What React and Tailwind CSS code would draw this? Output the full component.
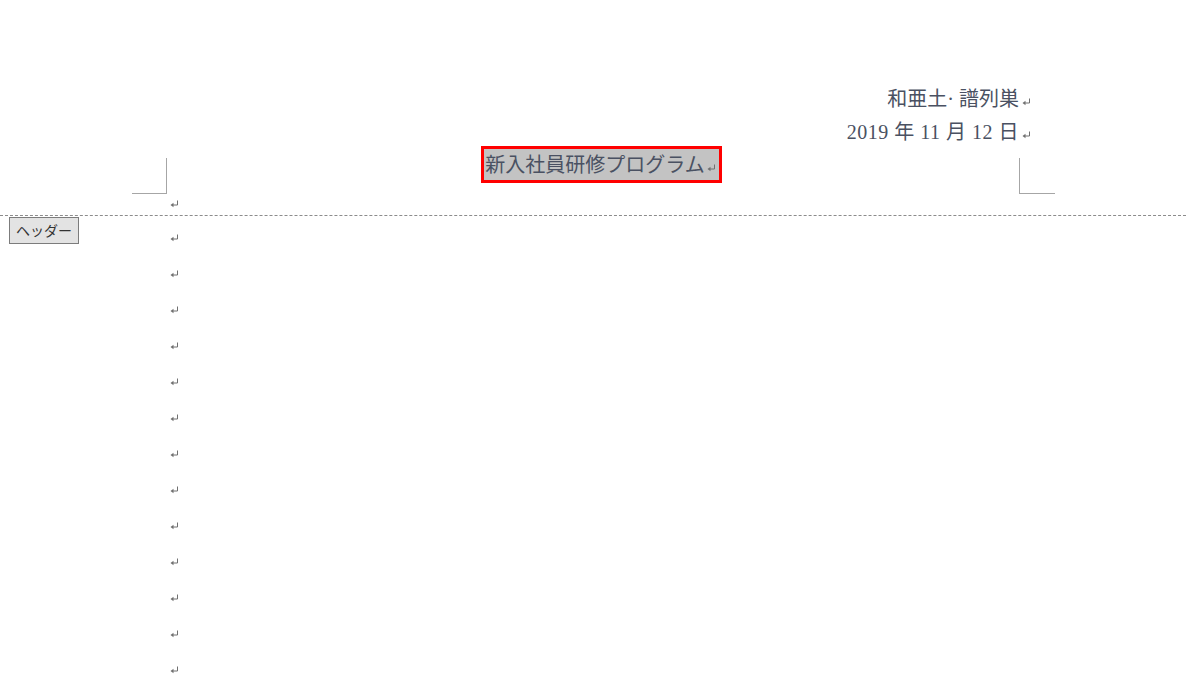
import React from "react";

const font = { fontFamily: '"Liberation Serif", "Noto Sans CJK JP", serif' };

function Mark({ className = "" }) {
  return (
    <svg width="9" height="8" viewBox="0 0 9 8" className={`shrink-0 ${className}`}>
      <path d="M7.5 0.5 V5 H2" stroke="#707070" strokeWidth="1" fill="none" />
      <path d="M0.5 5 L3.5 2.8 L3.5 7.2 Z" fill="#707070" />
    </svg>
  );
}

const bodyRows = Array.from({ length: 13 });

export default function App() {
  return (
    <div className="relative w-[1186px] h-[689px] bg-white overflow-hidden text-[#4a5162]" style={font}>
      {/* header area */}
      <div className="flex pt-[82px] h-[194px]">
        <div className="w-[167px] flex flex-col justify-end items-end">
          <div className="w-[35px] h-[36px] border-r border-b border-[#a6a6a6]" />
        </div>
        <div className="w-[852px] flex flex-col text-[20px]">
          <div className="h-[33px] flex items-center justify-end">
            <span>和亜土· 譜列巣</span>
            <span className="w-0 overflow-visible flex"><Mark className="ml-[3px] mt-[6px]" /></span>
          </div>
          <div className="h-[33px] flex items-center justify-end">
            <span className="tracking-[0.5px]">2019 年 11 月 12 日</span>
            <span className="w-0 overflow-visible flex"><Mark className="ml-[3px] mt-[6px]" /></span>
          </div>
          <div className="h-[33px] flex items-center justify-center pl-[17px]">
            <div className="h-[37px] flex items-center border-[3px] border-[#ff0000] bg-[#c3c3c3] pl-px pr-[3px]">
              <span>新入社員研修プログラム</span>
              <Mark className="ml-[2px] mt-[6px]" />
            </div>
          </div>
        </div>
        <div className="flex-1 flex flex-col justify-end">
          <div className="w-[36px] h-[36px] border-l border-b border-[#a6a6a6]" />
        </div>
      </div>

      {/* empty header paragraph */}
      <div className="h-[21px] pl-[170px] pt-[6px]">
        <Mark />
      </div>

      {/* header boundary */}
      <div className="border-t border-dashed border-[#8c8c8c]" />

      <div className="absolute left-[9px] top-[217px] w-[70px] h-[27px] bg-[#e3e3e3] border border-[#7c7c7c] flex items-center pl-[6px] text-[14px] text-[#333] font-['Noto_Sans_CJK_JP',sans-serif]">
        ヘッダー
      </div>

      {/* body */}
      <div className="flex flex-col pl-[170px] pt-[18px] gap-[28px]">
        {bodyRows.map((_, i) => (
          <Mark key={i} />
        ))}
      </div>
    </div>
  );
}
